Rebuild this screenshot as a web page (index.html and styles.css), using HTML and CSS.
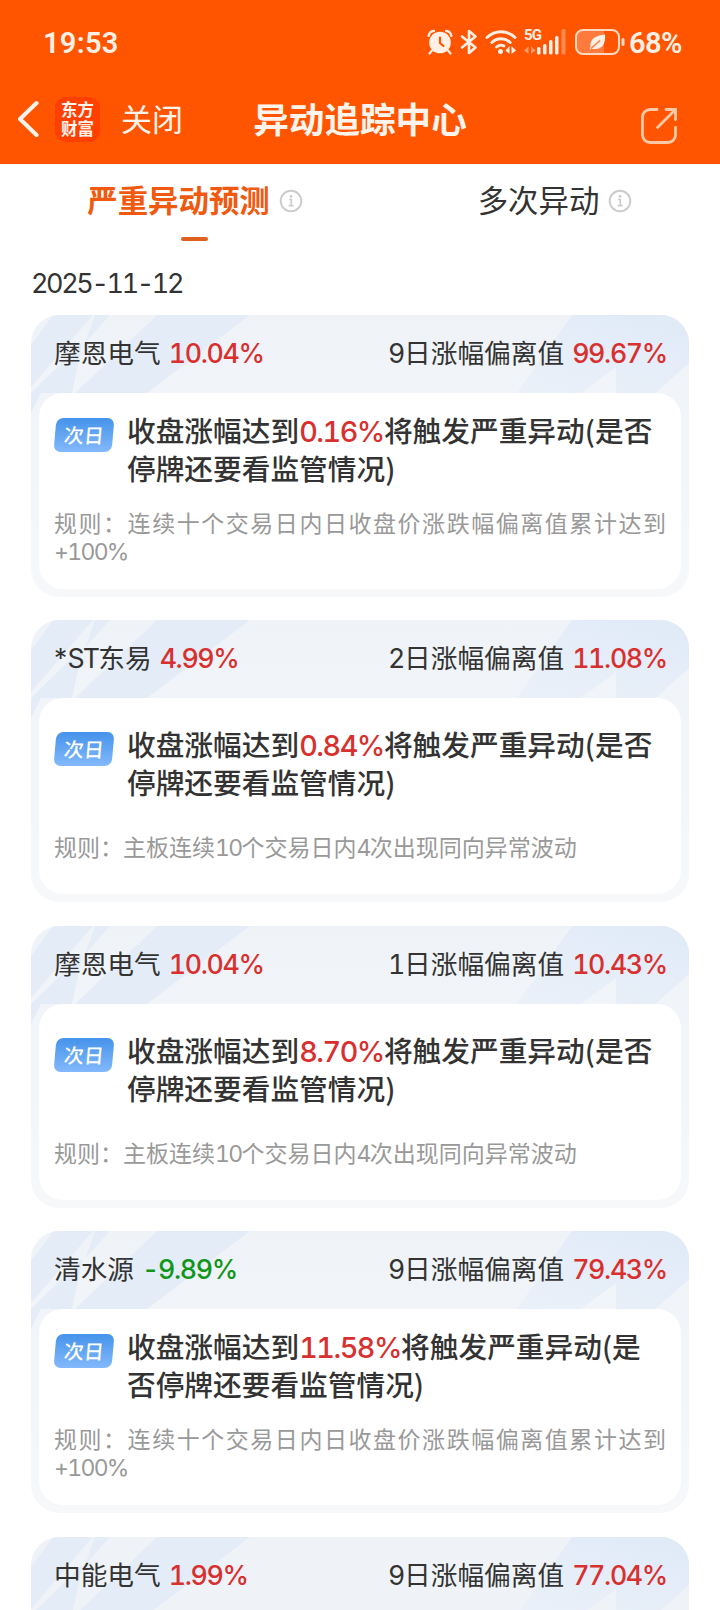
FILE: index.html
```html
<!DOCTYPE html>
<html lang="zh-CN">
<head>
    <meta charset="UTF-8">
    <meta name="viewport" content="width=device-width, initial-scale=1.0">
    <title>异动追踪中心</title>
    <link rel="stylesheet" href="styles.css">
</head>
<body>
    <!-- shared shapes -->
    <svg class="defs" width="0" height="0">
        <defs>
            <linearGradient id="fade" x1="0" y1="1" x2="0.6" y2="0">
                <stop offset="0" stop-color="#ebf1f9"/>
                <stop offset="1" stop-color="#e1ebf8"/>
            </linearGradient>
        </defs>
        <symbol id="streaks" viewBox="0 0 658 120">
            <path class="streak" d="M22 0H62L0 72V30z"/>
            <path class="streak" d="M64 0H79L54 28z"/>
            <path class="streak" d="M52 27L41 78H10L0 98V78z"/>
            <path class="streak" d="M126 0H219L116 78H44z"/>
            <path fill="url(#fade)" d="M541 0H658V48L620 82H585V52L550 78H486z"/>
        </symbol>
        <symbol id="info" viewBox="0 0 24 24">
            <circle cx="12" cy="12" r="10.3" fill="none" stroke="#ccc" stroke-width="2"/>
            <path d="M10 10.5h2.3v6M9.6 16.6h5" fill="none" stroke="#ccc" stroke-width="1.7"/>
            <circle cx="12" cy="7.4" r="1.4" fill="#ccc"/>
        </symbol>
    </svg>

    <div class="header">
        <div class="status-bar">
            <span class="time">19:53</span>
            <div class="status-icons">
                <svg class="alarm" width="26" height="26" viewBox="0 0 26 26">
                    <circle cx="13" cy="13.5" r="10.8" fill="#fff0e6"/>
                    <path d="M1.6 7A6 6 0 0 1 7 1.8M24.4 7A6 6 0 0 0 19 1.8M5 21.5L2.5 24.5M21 21.5L23.5 24.5" fill="none" stroke="#fff0e6" stroke-width="2.2" stroke-linecap="round"/>
                    <path d="M13 8.5v5.5l3.5 3" fill="none" stroke="#ff5500" stroke-width="2.2" stroke-linecap="round"/>
                </svg>
                <svg class="bluetooth" width="18" height="26" viewBox="0 0 18 26">
                    <path d="M2 7.5L15.5 18.5 9 24V2l6.5 5.5L2 18.5" fill="none" stroke="#fff0e6" stroke-width="2.6" stroke-linejoin="round" stroke-linecap="round"/>
                </svg>
                <svg class="wifi" width="32" height="26" viewBox="0 0 32 26">
                    <g fill="none" stroke="#fff0e6" stroke-width="2.8" stroke-linecap="round">
                        <path d="M2 8.5C10 .8 22 .8 30 8.5"/>
                        <path d="M6.8 13.5C12 8.5 20 8.5 25.2 13.5"/>
                        <path d="M11.5 18C14 15.8 17 15.8 19 17"/>
                    </g>
                    <circle cx="15.5" cy="22.5" r="2.5" fill="#fff0e6"/>
                    <path d="M24.5 17v8l-4-3.5zM26.5 17v8l4.5-3.5z" fill="#fff0e6"/>
                </svg>
                <div class="signal">
                    <span class="net">5G</span>
                    <svg width="42" height="26" viewBox="0 0 42 26">
                        <path d="M4.5 17.5v7.5L0 21.5zM7 17.5v7.5l4.5-3.5z" fill="#ff9966"/>
                        <g fill="#fff0e6">
                            <rect x="13" y="18" width="3.5" height="7.5" rx="1.5"/>
                            <rect x="19" y="15" width="3.5" height="10.5" rx="1.5"/>
                            <rect x="25" y="11" width="3.5" height="14.5" rx="1.5"/>
                            <rect x="31" y="7" width="3.5" height="18.5" rx="1.5"/>
                        </g>
                        <rect x="37.5" y="0" width="4" height="25.5" rx="1.5" fill="#ff8a50"/>
                    </svg>
                </div>
                <svg class="battery" width="50" height="26" viewBox="0 0 50 26">
                    <path d="M7 2h22v22H7a5 5 0 0 1-5-5V7a5 5 0 0 1 5-5z" fill="#ff7b3d"/>
                    <rect x="1" y="1" width="43" height="24" rx="7" fill="none" stroke="#ffd9c2" stroke-width="2"/>
                    <rect x="46.5" y="9" width="3" height="8" rx="1.5" fill="#ffd9c2"/>
                    <path d="M30 5.5C20 6.5 14.5 10.5 15.5 18l-1 2.5 2.5-.8C26 21.5 31 16 30 5.5z" fill="#fff0e6"/>
                    <path d="M16 19.5L25 11.5" stroke="#ff7b3d" stroke-width="1.5"/>
                </svg>
                <span class="percent">68%</span>
            </div>
        </div>
        <div class="nav-bar">
            <svg class="back" width="22" height="38" viewBox="0 0 22 38">
                <path d="M19.5 3L3 19 19.5 35" fill="none" stroke="#fff4ec" stroke-width="4" stroke-linecap="round" stroke-linejoin="round"/>
            </svg>
            <div class="logo"><span>东方</span><span>财富</span></div>
            <span class="close">关闭</span>
            <h1>异动追踪中心</h1>
            <svg class="share" width="38" height="38" viewBox="0 0 38 38">
                <g fill="none" stroke="#ffc9a6" stroke-width="2.8" stroke-linecap="round">
                    <path d="M17 2.5H10A7.5 7.5 0 0 0 2.5 10V28A7.5 7.5 0 0 0 10 35.5H28A7.5 7.5 0 0 0 35.5 28V20.5"/>
                    <path d="M17.5 20.5L35 3M26 2.5H35.5V12.5"/>
                </g>
            </svg>
        </div>
    </div>

    <div class="tabs">
        <div class="tab active">
            <span class="tab-name">严重异动预测</span>
            <svg width="24" height="24"><use href="#info"/></svg>
        </div>
        <div class="tab">
            <span class="tab-name">多次异动</span>
            <svg width="24" height="24"><use href="#info"/></svg>
        </div>
    </div>

    <div class="date">2025-11-12</div>

    <div class="list">
        <div class="card">
            <svg class="card-bg" width="658" height="120"><use href="#streaks"/></svg>
            <div class="card-head">
                <div>摩恩电气 <span class="num up">10.04%</span></div>
                <div><span class="num">9</span>日涨幅偏离值 <span class="num up">99.67%</span></div>
            </div>
            <div class="card-body">
                <div class="notice">
                    <span class="badge">次日</span>
                    <p>收盘涨幅达到<span class="num up">0.16%</span>将触发严重异动(是否停牌还要看监管情况)</p>
                </div>
                <p class="rule">规则：连续十个交易日内日收盘价涨跌幅偏离值累计达到<span class="num">+100%</span></p>
            </div>
        </div>

        <div class="card">
            <svg class="card-bg" width="658" height="120"><use href="#streaks"/></svg>
            <div class="card-head">
                <div><span class="num st">*ST</span>东易 <span class="num up">4.99%</span></div>
                <div><span class="num">2</span>日涨幅偏离值 <span class="num up">11.08%</span></div>
            </div>
            <div class="card-body">
                <div class="notice">
                    <span class="badge">次日</span>
                    <p>收盘涨幅达到<span class="num up">0.84%</span>将触发严重异动(是否停牌还要看监管情况)</p>
                </div>
                <p class="rule">规则：主板连续<span class="num">10</span>个交易日内<span class="num">4</span>次出现同向异常波动</p>
            </div>
        </div>

        <div class="card">
            <svg class="card-bg" width="658" height="120"><use href="#streaks"/></svg>
            <div class="card-head">
                <div>摩恩电气 <span class="num up">10.04%</span></div>
                <div><span class="num">1</span>日涨幅偏离值 <span class="num up">10.43%</span></div>
            </div>
            <div class="card-body">
                <div class="notice">
                    <span class="badge">次日</span>
                    <p>收盘涨幅达到<span class="num up">8.70%</span>将触发严重异动(是否停牌还要看监管情况)</p>
                </div>
                <p class="rule">规则：主板连续<span class="num">10</span>个交易日内<span class="num">4</span>次出现同向异常波动</p>
            </div>
        </div>

        <div class="card">
            <svg class="card-bg" width="658" height="120"><use href="#streaks"/></svg>
            <div class="card-head">
                <div>清水源 <span class="num down">-9.89%</span></div>
                <div><span class="num">9</span>日涨幅偏离值 <span class="num up">79.43%</span></div>
            </div>
            <div class="card-body">
                <div class="notice">
                    <span class="badge">次日</span>
                    <p>收盘涨幅达到<span class="num up">11.58%</span>将触发严重异动(是否停牌还要看监管情况)</p>
                </div>
                <p class="rule">规则：连续十个交易日内日收盘价涨跌幅偏离值累计达到<span class="num">+100%</span></p>
            </div>
        </div>

        <div class="card last">
            <svg class="card-bg" width="658" height="120"><use href="#streaks"/></svg>
            <div class="card-head">
                <div>中能电气 <span class="num up">1.99%</span></div>
                <div><span class="num">9</span>日涨幅偏离值 <span class="num up">77.04%</span></div>
            </div>
        </div>
    </div>
</body>
</html>
```
FILE: styles.css
```css
* {
    box-sizing: border-box;
}
body {
    margin: 0;
    height: 1610px;
    overflow: hidden;
    background: #fff;
    color: #333;
    font-family: "Noto Sans CJK SC", sans-serif;
}
h1, p {
    margin: 0;
}
svg {
    display: block;
    flex-shrink: 0;
}
.defs {
    position: absolute;
}

/* header */
.header {
    height: 164px;
    background: #ff5500;
    color: #fff4ec;
}
.status-bar {
    display: flex;
    justify-content: space-between;
    align-items: center;
    height: 84px;
    padding: 0 38px 0 43px;
    font-family: Roboto, sans-serif;
    font-weight: 600;
    font-size: 29px;
    color: #fff0e6;
}
.time {
    margin-top: 2px;
    letter-spacing: 0.3px;
}
.status-icons {
    display: flex;
    align-items: center;
}
.bluetooth {
    margin-left: 7px;
}
.wifi {
    margin-left: 7px;
}
.signal {
    position: relative;
    margin-left: 7px;
}
.net {
    position: absolute;
    left: 0;
    top: -1px;
    font-size: 15px;
    line-height: 14px;
    font-weight: 700;
    letter-spacing: -0.8px;
}
.battery {
    margin: 0 4px 0 9px;
}
.percent {
    margin-top: 2px;
    letter-spacing: -0.5px;
}
.nav-bar {
    position: relative;
    display: flex;
    align-items: center;
    height: 70px;
    padding: 0 42px 0 17px;
}
.logo {
    display: flex;
    flex-direction: column;
    align-items: center;
    justify-content: center;
    width: 45px;
    height: 45px;
    margin-left: 16px;
    border-radius: 11px;
    background: #ff4000;
    font-weight: 700;
    font-size: 16.5px;
    line-height: 19px;
}
.close {
    margin: -2px 0 0 21px;
    font-size: 31px;
    line-height: 40px;
}
h1 {
    position: absolute;
    left: 0;
    right: 0;
    top: 12px;
    text-align: center;
    font-size: 35.6px;
    font-weight: 700;
    line-height: 44px;
}
.share {
    margin: 14px 0 0 auto;
}

/* tabs */
.tabs {
    display: flex;
    height: 92px;
}
.tab {
    display: flex;
    justify-content: center;
    align-items: flex-start;
    width: 50%;
    padding: 13px 0 0 30px;
    font-size: 30.4px;
    line-height: 44px;
}
.tab svg {
    margin: 12px 0 0 9px;
}
.tab-name {
    position: relative;
}
.active .tab-name {
    color: #f05a10;
    font-weight: 700;
}
.active .tab-name::after {
    content: "";
    position: absolute;
    left: 50%;
    bottom: -20px;
    width: 27px;
    height: 4px;
    margin-left: 3px;
    border-radius: 2px;
    background: #e06020;
}
.date {
    height: 59px;
    padding-left: 31px;
    font-family: Inter, sans-serif;
    font-variant-numeric: tabular-nums;
    letter-spacing: -2.4px;
    font-size: 27px;
    line-height: 56px;
}

/* cards */
.list {
    display: flex;
    flex-direction: column;
    gap: 23.4px;
    padding: 0 31px;
}
.card {
    position: relative;
    flex-shrink: 0;
    height: 282px;
    padding: 0 8px 8px;
    border-radius: 28px;
    overflow: hidden;
    background: linear-gradient(#eff3f8, #f6f8fa);
}
.last {
    height: 73px;
    border-radius: 28px 28px 0 0;
    background: #eff3f8;
}
.card-bg {
    position: absolute;
    left: 0;
    top: 0;
}
.streak {
    fill: #e4edf7;
}
.card-head {
    position: relative;
    display: flex;
    justify-content: space-between;
    height: 78px;
    padding: 0 14px 0 15px;
    font-size: 26.7px;
    line-height: 73px;
    word-spacing: 2px;
}
.num {
    font-family: Inter, sans-serif;
    font-variant-numeric: tabular-nums;
    letter-spacing: -0.05em;
    line-height: 1;
}
.st {
    margin-left: -2px;
    letter-spacing: -1.8px;
}
.up, .down {
    font-weight: 500;
}
.up {
    color: #d8302f;
}
.down {
    color: #109618;
}
.card-body {
    position: relative;
    display: flex;
    flex-direction: column;
    justify-content: space-evenly;
    height: 196px;
    padding: 0 15px 5px;
    border-radius: 24px;
    background: #fff;
}
.notice {
    display: flex;
    align-items: flex-start;
    margin: -2px 0 2px;
    font-size: 28.7px;
    line-height: 38px;
    font-weight: 500;
}
.notice p {
    width: 536px;
}
.badge {
    flex-shrink: 0;
    width: 58px;
    height: 34px;
    margin: 7px 14px 0 1px;
    border-radius: 7px;
    background: linear-gradient(#4593ea, #83b9fb);
    transform: skewX(-5deg);
    color: #fff;
    font-size: 20px;
    line-height: 34px;
    text-align: center;
}
.rule {
    color: #999;
    font-size: 23px;
    line-height: 28px;
    text-align: justify;
}
.rule .num {
    letter-spacing: -1.7px;
}
```
